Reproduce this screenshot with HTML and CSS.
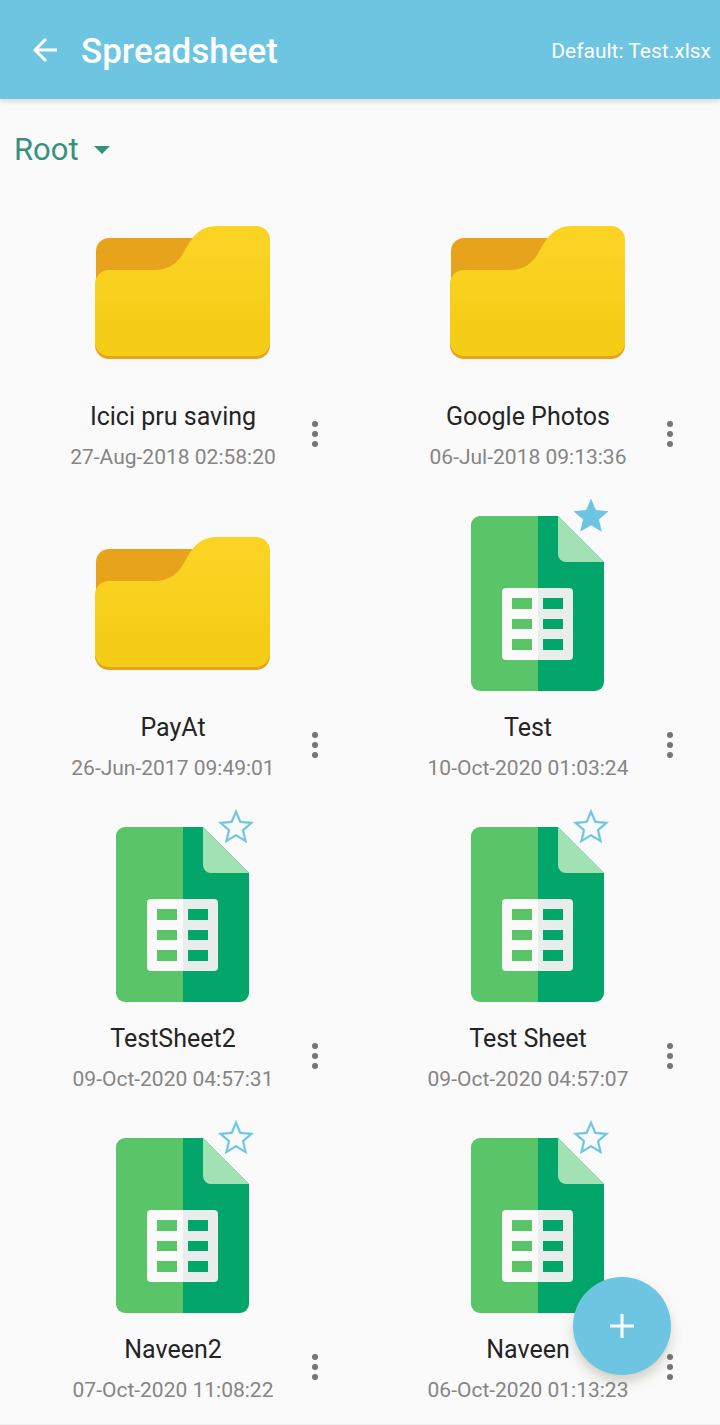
FILE: index.html
```html
<!DOCTYPE html>
<html lang="en">
<head>
<meta charset="utf-8">
<meta name="viewport" content="width=device-width, initial-scale=1">
<title>Spreadsheet</title>
<link rel="stylesheet" href="styles.css">
</head>
<body>
<svg class="defs" aria-hidden="true">
  <defs>
    <linearGradient id="folder-front" x1="0" y1="0" x2="0" y2="1">
      <stop offset="0.2" stop-color="#fad323"/>
      <stop offset="0.8" stop-color="#f5cd17"/>
    </linearGradient>
    <symbol id="folder" viewBox="0 0 175 175">
      <path fill="#e8a31c" d="M1 67V46A13 13 0 0 1 14 33H105V75H1z"/>
      <path fill="#e8a31c" d="M0 80H175V140A14 14 0 0 1 161 154H14A14 14 0 0 1 0 140z"/>
      <path fill="url(#folder-front)" d="M0 80V79A14 14 0 0 1 14 65H60C75 65 84 57 90 45C98 30 106 21 121 21H161A14 14 0 0 1 175 35V137A14 14 0 0 1 161 151H14A14 14 0 0 1 0 137z"/>
    </symbol>
    <symbol id="sheet" viewBox="0 0 175 175">
      <path fill="#5ac568" d="M88 0H30A9 9 0 0 0 21 9V166A9 9 0 0 0 30 175H88z"/>
      <path fill="#03a66a" d="M88 0H108L154 46V166A9 9 0 0 1 145 175H88z"/>
      <path fill="#a1e1b4" d="M108 0L154 46H116A8 8 0 0 1 108 38z"/>
      <path fill="#fafafa" d="M88 72H56A4 4 0 0 0 52 76V140A4 4 0 0 0 56 144H88z"/>
      <path fill="#e9eeec" d="M88 72H119A4 4 0 0 1 123 76V140A4 4 0 0 1 119 144H88z"/>
      <path fill="#5ac568" d="M62 82H82V93H62zM62 103H82V113H62zM62 123H82V134H62z"/>
      <path fill="#03a66a" d="M93 82H113V93H93zM93 103H113V113H93zM93 123H113V134H93z"/>
    </symbol>
    <symbol id="star" viewBox="0 0 24 24">
      <path d="M12 17.27L18.18 21l-1.64-7.03L22 9.24l-7.19-.61L12 2 9.19 8.63 2 9.24l5.46 4.73L5.82 21z"/>
    </symbol>
    <symbol id="star-outline" viewBox="0 0 24 24">
      <path stroke="#6ec5e2" stroke-width="0.3" d="M22 9.24l-7.19-.62L12 2 9.19 8.63 2 9.24l5.46 4.73L5.82 21 12 17.27 18.18 21l-1.63-7.03L22 9.24zM12 16.1l-4.7 2.84 1.25-5.34-4.15-3.6 5.47-.47L12 4.5l2.14 5.04 5.46.47-4.15 3.6 1.25 5.34L12 16.1z"/>
    </symbol>
    <symbol id="more" viewBox="0 0 20 42">
      <circle cx="10" cy="11" r="3"/><circle cx="10" cy="21" r="3"/><circle cx="10" cy="31" r="3"/>
    </symbol>
  </defs>
</svg>

<header class="app-bar">
  <button class="back" type="button" aria-label="Back">
    <svg viewBox="0 0 24 24" aria-hidden="true"><path d="M24 12H3M13 1L2 12 13 23"/></svg>
  </button>
  <h1 class="title">Spreadsheet</h1>
  <p class="default-file">Default: Test.xlsx</p>
</header>

<main class="content">
  <div class="path">
    <select class="path-select" aria-label="Folder">
      <option>Root</option>
    </select>
    <svg class="caret" viewBox="0 0 16 8" aria-hidden="true"><path d="M0 0H16L8 8z"/></svg>
  </div>

  <ul class="files">
    <li class="file">
      <div class="thumb"><svg class="art" aria-hidden="true"><use href="#folder"/></svg></div>
      <div class="meta">
        <div class="label"><h2 class="name">Icici pru saving</h2><p class="date">27-Aug-2018 02:58:20</p></div>
        <button class="more" type="button" aria-label="More options"><svg><use href="#more"/></svg></button>
      </div>
    </li>
    <li class="file">
      <div class="thumb"><svg class="art" aria-hidden="true"><use href="#folder"/></svg></div>
      <div class="meta">
        <div class="label"><h2 class="name">Google Photos</h2><p class="date">06-Jul-2018 09:13:36</p></div>
        <button class="more" type="button" aria-label="More options"><svg><use href="#more"/></svg></button>
      </div>
    </li>
    <li class="file">
      <div class="thumb"><svg class="art" aria-hidden="true"><use href="#folder"/></svg></div>
      <div class="meta">
        <div class="label"><h2 class="name">PayAt</h2><p class="date">26-Jun-2017 09:49:01</p></div>
        <button class="more" type="button" aria-label="More options"><svg><use href="#more"/></svg></button>
      </div>
    </li>
    <li class="file">
      <div class="thumb">
        <svg class="art" aria-hidden="true"><use href="#sheet"/></svg>
        <button class="star" type="button" aria-label="Default file" aria-pressed="true"><svg><use href="#star"/></svg></button>
      </div>
      <div class="meta">
        <div class="label"><h2 class="name">Test</h2><p class="date">10-Oct-2020 01:03:24</p></div>
        <button class="more" type="button" aria-label="More options"><svg><use href="#more"/></svg></button>
      </div>
    </li>
    <li class="file">
      <div class="thumb">
        <svg class="art" aria-hidden="true"><use href="#sheet"/></svg>
        <button class="star" type="button" aria-label="Set as default" aria-pressed="false"><svg><use href="#star-outline"/></svg></button>
      </div>
      <div class="meta">
        <div class="label"><h2 class="name">TestSheet2</h2><p class="date">09-Oct-2020 04:57:31</p></div>
        <button class="more" type="button" aria-label="More options"><svg><use href="#more"/></svg></button>
      </div>
    </li>
    <li class="file">
      <div class="thumb">
        <svg class="art" aria-hidden="true"><use href="#sheet"/></svg>
        <button class="star" type="button" aria-label="Set as default" aria-pressed="false"><svg><use href="#star-outline"/></svg></button>
      </div>
      <div class="meta">
        <div class="label"><h2 class="name">Test Sheet</h2><p class="date">09-Oct-2020 04:57:07</p></div>
        <button class="more" type="button" aria-label="More options"><svg><use href="#more"/></svg></button>
      </div>
    </li>
    <li class="file">
      <div class="thumb">
        <svg class="art" aria-hidden="true"><use href="#sheet"/></svg>
        <button class="star" type="button" aria-label="Set as default" aria-pressed="false"><svg><use href="#star-outline"/></svg></button>
      </div>
      <div class="meta">
        <div class="label"><h2 class="name">Naveen2</h2><p class="date">07-Oct-2020 11:08:22</p></div>
        <button class="more" type="button" aria-label="More options"><svg><use href="#more"/></svg></button>
      </div>
    </li>
    <li class="file">
      <div class="thumb">
        <svg class="art" aria-hidden="true"><use href="#sheet"/></svg>
        <button class="star" type="button" aria-label="Set as default" aria-pressed="false"><svg><use href="#star-outline"/></svg></button>
      </div>
      <div class="meta">
        <div class="label"><h2 class="name">Naveen</h2><p class="date">06-Oct-2020 01:13:23</p></div>
        <button class="more" type="button" aria-label="More options"><svg><use href="#more"/></svg></button>
      </div>
    </li>
  </ul>
</main>

<button class="fab" type="button" aria-label="New spreadsheet">
  <svg viewBox="0 0 24 24" aria-hidden="true"><path d="M12 0V24M0 12H24"/></svg>
</button>
</body>
</html>
```

FILE: styles.css
```css
:root {
  --sky: #6ec5e2;
  --page: #fafafa;
  --teal: #35917f;
}

* {
  box-sizing: border-box;
}

body {
  margin: 0;
  min-height: 100vh;
  background: var(--page);
  color: #242424;
  font-family: Roboto, "Liberation Sans", sans-serif;
  border-bottom: 1px solid #efefef;
}

h1, h2, p, ul {
  margin: 0;
  padding: 0;
}

button, select {
  margin: 0;
  padding: 0;
  border: 0;
  background: none;
  font: inherit;
  cursor: pointer;
}

svg {
  display: block;
}

.defs {
  position: absolute;
  width: 0;
  height: 0;
}

/* Top bar */
.app-bar {
  display: flex;
  align-items: center;
  height: 99px;
  padding: 0 9px 0 25px;
  background: var(--sky);
  color: #fff;
  box-shadow: 0 3px 5px rgba(60, 90, 80, 0.16);
}

.back {
  display: grid;
  place-items: center;
  width: 40px;
  height: 48px;
  margin-right: 16px;
}

.back svg {
  width: 24px;
  height: 24px;
  fill: none;
  stroke: #fff;
  stroke-width: 3;
}

.title {
  flex: 1;
  padding-top: 4px;
  font-size: 35px;
  line-height: 40px;
  font-weight: 500;
}

.default-file {
  padding-top: 2px;
  font-size: 21px;
  line-height: 24px;
}

/* Folder path */
.path {
  display: inline-grid;
  align-items: center;
  margin: 31px 0 0 14px;
}

.path-select,
.caret {
  grid-area: 1 / 1;
}

.path-select {
  appearance: none;
  height: 40px;
  padding-right: 31px;
  color: var(--teal);
  font-size: 31px;
  line-height: 40px;
}

.caret {
  justify-self: end;
  width: 16px;
  height: 8px;
  fill: var(--teal);
  pointer-events: none;
}

/* File grid */
.files {
  display: grid;
  grid-template-columns: repeat(2, 1fr);
  row-gap: 43px;
  padding: 35px 5px 16px;
  list-style: none;
}

.thumb {
  position: relative;
  width: 175px;
  margin: 0 auto;
}

.art {
  width: 175px;
  height: 175px;
}

.star {
  position: absolute;
  top: -21px;
  right: 13px;
}

.star svg {
  width: 42px;
  height: 42px;
  fill: var(--sky);
}

.meta {
  display: flex;
  align-items: flex-start;
  margin-top: 21px;
  padding: 0 35px 0 36px;
}

.label {
  flex: 1;
  text-align: center;
}

.name {
  font-size: 25px;
  line-height: 32px;
  font-weight: 400;
}

.date {
  margin-top: 8px;
  color: #858585;
  font-size: 21px;
  line-height: 32px;
}

.more {
  margin-top: 12px;
}

.more svg {
  width: 20px;
  height: 42px;
  fill: #757575;
}

/* Floating action button */
.fab {
  position: fixed;
  right: 49px;
  bottom: 50px;
  display: grid;
  place-items: center;
  width: 98px;
  height: 98px;
  border-radius: 50%;
  background: var(--sky);
  box-shadow: 0 7px 12px rgba(90, 90, 60, 0.25);
}

.fab svg {
  width: 24px;
  height: 24px;
  stroke: #fff;
  stroke-width: 3;
}
```
